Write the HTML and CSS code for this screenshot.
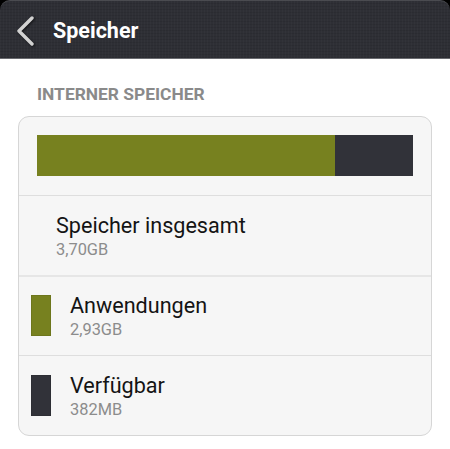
FILE: index.html
```html
<!DOCTYPE html>
<html lang="de">
<head>
    <meta charset="UTF-8">
    <meta name="viewport" content="width=device-width, initial-scale=1.0">
    <title>Speicher</title>
    <link rel="stylesheet" href="styles.css">
</head>
<body>
    <div class="topbar-wrap">
        <div class="topbar">
            <svg class="back-icon" width="24" height="32" viewBox="0 0 24 32">
                <polyline points="18,3 5,16 18,29" fill="none" stroke="#d2d2d2" stroke-width="3.4" stroke-linecap="round" stroke-linejoin="round"/>
            </svg>
            <span class="topbar-title">Speicher</span>
        </div>
    </div>

    <div class="section-label">INTERNER SPEICHER</div>

    <div class="card">
        <div class="usage">
            <div class="usage-bar">
                <div class="usage-apps" style="width: 79.2%"></div>
                <div class="usage-free"></div>
            </div>
        </div>

        <div class="row row-plain">
            <div class="row-text">
                <div class="row-title">Speicher insgesamt</div>
                <div class="row-sub">3,70GB</div>
            </div>
        </div>

        <div class="row row-thick">
            <div class="swatch swatch-apps"></div>
            <div class="row-text">
                <div class="row-title">Anwendungen</div>
                <div class="row-sub">2,93GB</div>
            </div>
        </div>

        <div class="row">
            <div class="swatch swatch-free"></div>
            <div class="row-text">
                <div class="row-title">Verfügbar</div>
                <div class="row-sub">382MB</div>
            </div>
        </div>
    </div>
</body>
</html>
```

FILE: styles.css
```css
body {
    margin: 0;
    background: #ffffff;
    font-family: Roboto, "Liberation Sans", Arial, sans-serif;
}
.topbar-wrap {
    background: #000;
}
.topbar {
    height: 57px;
    display: flex;
    align-items: center;
    background-color: #2e2f35;
    background-image: repeating-linear-gradient(90deg, rgba(255,255,255,0.02) 0 1px, transparent 1px 3px),
                      repeating-linear-gradient(0deg, rgba(0,0,0,0.08) 0 1px, transparent 1px 3px);
    border-top: 1px solid #4a4b50;
    border-bottom: 1px solid #6a6b70;
    border-radius: 10px 10px 0 0;
}
.back-icon {
    margin-left: 14px;
    margin-top: 2px;
    filter: drop-shadow(1px 1px 1px rgba(0,0,0,0.6));
}
.topbar-title {
    margin-left: 15px;
    margin-top: 3px;
    color: #fff;
    font-size: 21.5px;
    font-weight: bold;
    line-height: 26px;
}
.section-label {
    margin: 25px 0 12px 37px;
    color: #8a8a8a;
    font-size: 17.4px;
    font-weight: bold;
    line-height: 20px;
}
.card {
    margin: 0 18px;
    background: #f6f6f6;
    border: 1px solid #d6d6d6;
    border-radius: 11px;
    overflow: hidden;
}
.usage {
    padding: 18px 18px 19px 18px;
}
.usage-bar {
    display: flex;
    height: 41px;
}
.usage-apps {
    background: #77811f;
}
.usage-free {
    flex: 1;
    background: #313239;
}
.row {
    display: flex;
    align-items: flex-start;
    padding: 18px 0 13px 12px;
    border-top: 1px solid #dedede;
}
.row-thick {
    border-top: 2px solid #e6e6e6;
    padding-top: 17px;
}
.row-plain {
    padding-left: 37px;
}
.swatch {
    width: 20px;
    height: 41px;
    margin: 1px 19px 0 0;
    box-sizing: border-box;
    border: 1px solid rgba(0,0,0,0.08);
}
.swatch-apps {
    background: #77811f;
}
.swatch-free {
    background: #313239;
}
.row-title {
    color: #141414;
    font-size: 21.6px;
    line-height: 24px;
}
.row-sub {
    color: #8c8c8c;
    font-size: 16.4px;
    line-height: 24px;
}
```
